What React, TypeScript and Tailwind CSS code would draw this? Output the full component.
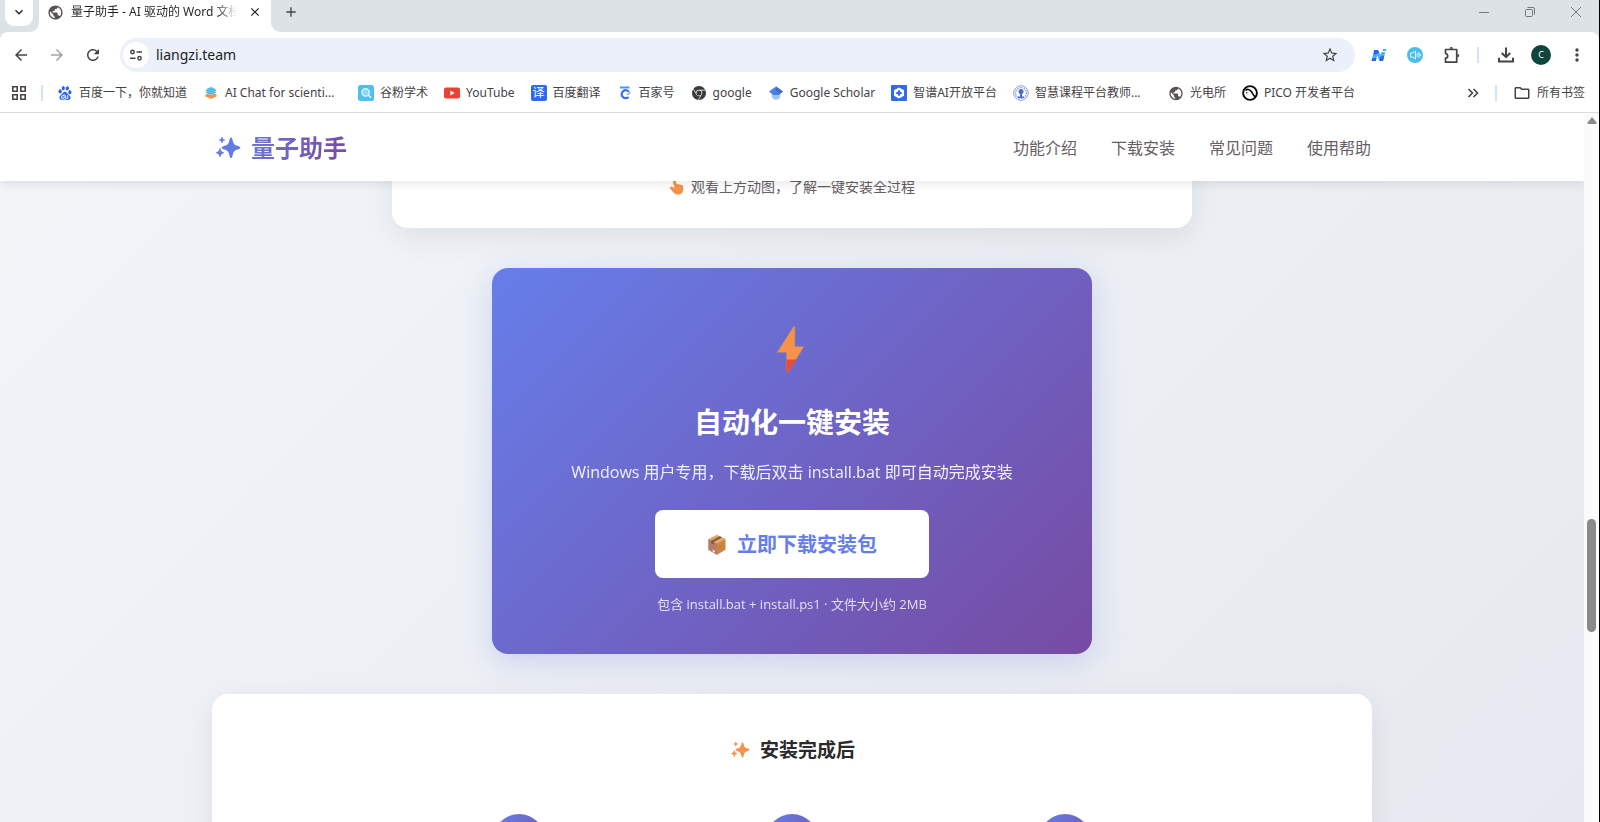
import type { ReactNode } from 'react';
import {
  MdArrowBack,
  MdArrowForward,
  MdClose,
  MdAdd,
  MdKeyboardArrowDown,
  MdMoreVert,
  MdOutlineFolder,
  MdPublic,
  MdRefresh,
  MdStarOutline,
} from 'react-icons/md';
import { SiBaidu, SiGooglechrome } from 'react-icons/si';

/* ---------- Icons ---------- */

function Sparkles({ className }: { className: string }) {
  return (
    <svg viewBox="0 0 28 24" className={className} fill="currentColor" aria-hidden="true">
      <path d="M18 1.5c.8 0 1.2 1 1.8 3.4.8 3 1.700 4 4.600 4.900 1.900.6 2.900 1.100 2.900 1.900s-1 1.300-2.900 1.900c-2.900.9-3.800 1.900-4.600 4.900-.6 2.500-1 3.600-1.800 3.600s-1.200-1.100-1.800-3.600c-.8-3-1.700-4-4.600-4.900-1.900-.6-2.900-1.100-2.900-1.900s1-1.300 2.900-1.900c2.900-.9 3.800-1.900 4.600-4.900C16.800 2.500 17.200 1.500 18 1.500z" />
      <path d="M9 1c.6 1.900.9 2.200 2.800 3C9.900 4.800 9.600 5.100 9 7 8.400 5.100 8.100 4.800 6.200 4 8.100 3.200 8.400 2.900 9 1z" stroke="currentColor" strokeWidth=".6" />
      <path d="M7 12.500c.7 2.700 1.200 3.200 3.700 4.200-2.500 1-3 1.500-3.700 4.200-.7-2.700-1.200-3.200-3.700-4.200 2.500-1 3-1.500 3.700-4.200z" stroke="currentColor" strokeWidth=".8" />
    </svg>
  );
}

function Bolt() {
  return (
    <svg viewBox="0 0 34 52" className="h-[52px] w-[34px]" aria-hidden="true">
      <path d="M18.500 2.500 2 28.500h9.500V48h2L29 22.500h-9V2.500z" fill="#f7924a" stroke="#9c8290" strokeWidth=".7" />
      <path d="M11.500 35.500h10L13.500 48h-2z" fill="#ea4a3a" />
    </svg>
  );
}

function PackageBox() {
  return (
    <svg viewBox="0 0 20 22" className="h-[22px] w-5" aria-hidden="true">
      <path d="M10 1 18.500 5.200v10.500L10 20.800 1.500 15.700V5.200z" fill="#c9853f" />
      <path d="M10 1 18.500 5.200 10 9.700 1.500 5.200z" fill="#e5a865" />
      <path d="M1.500 5.200 10 9.700v11.100L1.500 15.700z" fill="#b57c6e" />
      <path d="M12.700 2.300 4.200 6.700v2.800l2.400 1.300V8L15 3.500z" fill="#7c5a4c" />
      <path d="m5.500 15.500 2.500 1.300v2l-2.500-1.300z" fill="#e4ddd8" />
    </svg>
  );
}

function PointUp() {
  return (
    <svg viewBox="0 0 16 16" className="h-4 w-4" fill="#f7924a" aria-hidden="true">
      <path d="M4.600 1.600c.9-.6 1.900-.2 2.200.7L8 5.500c.5-.7 1.700-.6 2.100.2.600-.5 1.600-.3 2 .4.900-.4 1.900.1 2 1.200.3 2.200.1 4.300-.8 6.100-.8 1.500-2.200 2.100-4.300 2.100-2.700 0-4.100-1.200-5.300-2.700L1.300 9.700c-.6-.8-.3-1.700.5-2s1.500.1 2.500.9l1.200.3L4 3.400c-.2-.7 0-1.400.6-1.800z" />
    </svg>
  );
}

function AppsGrid() {
  return (
    <svg viewBox="0 0 16 16" className="h-4 w-4" fill="none" stroke="#4a4446" strokeWidth="1.600" aria-hidden="true">
      <path d="M1.800 1.800h4.400v4.400H1.800zM9.800 1.800h4.400v4.400H9.800zM1.800 9.800h4.400v4.400H1.800zM9.800 9.800h4.400v4.400H9.800z" />
    </svg>
  );
}

function SiteSettings() {
  return (
    <svg viewBox="0 0 14 14" className="h-3.5 w-3.5" fill="none" stroke="#444" strokeWidth="1.500" aria-hidden="true">
      <circle cx="3.500" cy="4" r="1.700" />
      <path d="M7.500 4H13M1 10.200h5.500" />
      <circle cx="10.500" cy="10.200" r="1.700" />
    </svg>
  );
}

function StackIcon() {
  return (
    <svg viewBox="0 0 16 16" className="h-4 w-4" aria-hidden="true">
      <path d="M2.500 9.500 4.500 8.500 8 10l3.500-1.500 2 1v2L8 14l-5.500-2.500z" fill="#f7924a" />
      <path d="m8 2 3 1.200 2.500 2L12 6.500l1.500 1L8 10 2.500 7.500 4 6.500 2.500 5.200 5 3.200z" fill="#53bfe8" />
    </svg>
  );
}

function SearchBadge() {
  return (
    <svg viewBox="0 0 16 16" className="h-4 w-4" aria-hidden="true">
      <rect width="16" height="16" rx="2.500" fill="#4cc0ee" />
      <circle cx="7.600" cy="7.400" r="3.700" fill="#8fd8f5" stroke="#e6f7fd" strokeWidth="1.200" />
      <path d="m10.500 10.300 2.500 2.500" stroke="#e6f7fd" strokeWidth="1.600" />
    </svg>
  );
}

function YouTubeIcon() {
  return (
    <svg viewBox="0 0 16 16" className="h-4 w-4" aria-hidden="true">
      <rect y="2.500" width="16" height="11" rx="2" fill="#e94235" />
      <path d="M6.300 5.500v5L10.700 8z" fill="#fff" />
    </svg>
  );
}

function BaijiahaoIcon() {
  return (
    <svg viewBox="0 0 16 16" className="h-4 w-4" fill="none" aria-hidden="true">
      <path d="M3 2.500h9.500" stroke="#3f9df0" strokeWidth="2" />
      <path d="M12 7A4 4 0 1 0 11.500 12" stroke="#3b6fe8" strokeWidth="2.200" />
      <path d="M9.500 9.500c1.800 0 3-.5 3.700-2" stroke="#7aa7f5" strokeWidth="1.600" />
    </svg>
  );
}

function ScholarIcon() {
  return (
    <svg viewBox="0 0 16 16" className="h-4 w-4" aria-hidden="true">
      <circle cx="8" cy="10.500" r="4.300" fill="#9cc4f5" />
      <path d="M8 1.500 15 6.500l-2.800 2.300-1.200 1.200H5L3.800 8.800 1 6.500z" fill="#4a80e0" />
      <path d="M8 1.500 15 6.500l-2.800 2.300L8 6z" fill="#3f6fc4" />
    </svg>
  );
}

function ZhipuIcon() {
  return (
    <svg viewBox="0 0 16 16" className="h-4 w-4" aria-hidden="true">
      <rect width="16" height="16" rx="1" fill="#2f6bea" />
      <path d="m8 2.500 5 2.800v5.400l-5 2.800-5-2.800V5.300z" fill="#fff" />
      <path d="m8 5.200.9 1.900 1.900.9-1.900.9L8 10.800l-.9-1.900L5.200 8l1.900-.9z" fill="#2f6bea" stroke="#2f6bea" />
    </svg>
  );
}

function SchoolSeal() {
  return (
    <svg viewBox="0 0 16 16" className="h-4 w-4" fill="none" aria-hidden="true">
      <circle cx="8" cy="8" r="7.300" stroke="#8f9fdd" />
      <circle cx="8" cy="8" r="5.400" stroke="#8f9fdd" strokeDasharray="1.500 .8" strokeWidth="1.400" />
      <circle cx="8" cy="6.500" r="2.500" fill="#4b6cc4" />
      <path d="M7 6.500h2v6.500H7zM5 11.500h6v1.500H5z" fill="#4b6cc4" />
    </svg>
  );
}

function PicoIcon() {
  return (
    <svg viewBox="0 0 16 16" className="h-4 w-4" fill="none" stroke="#0a0a0a" aria-hidden="true">
      <circle cx="8" cy="8" r="6.900" strokeWidth="1.900" />
      <path d="M3.500 5.500C5 3.800 7.500 4 9.300 6.500s2 4 4 5.500" strokeWidth="1.600" />
      <path d="M4 7.800h1.500" />
    </svg>
  );
}

function PuzzleIcon() {
  return (
    <svg viewBox="0 0 18 18" className="h-[18px] w-[18px]" fill="none" stroke="#444" strokeWidth="1.700" aria-hidden="true">
      <path d="M2.500 3.500h11.200v12.700H2.500v-4c1.500-.2 2.200-1 2.200-2.300s-.7-2.200-2.200-2.400z" strokeLinejoin="round" />
      <path d="M6.500 2.800a1.800 1.800 0 0 1 3.600 0zM14.300 7.700a1.900 1.900 0 0 1 0 3.800z" fill="#444" stroke="none" />
    </svg>
  );
}

function DownloadIcon() {
  return (
    <svg viewBox="0 0 18 18" className="h-[18px] w-[18px]" fill="none" stroke="#444" strokeWidth="2" aria-hidden="true">
      <path d="M9 1.500v9.500M4.800 7 9 11.200 13.200 7M2 11.800v3.700h14v-3.700" />
    </svg>
  );
}

function NotebookIcon() {
  return (
    <svg viewBox="0 0 16 16" className="h-4 w-4" aria-hidden="true">
      <path d="M3 3h4l2.300 5L10.500 5h3.700L12 14H8.500L6.200 8.500 4.700 14H.6z" fill="#47b4f2" />
      <path d="M3 3h4l1.300 3-5.500 2zM1.400 11h4.100l-.8 3H.6zM9 10l4.300-1.500L12 14H8.500z" fill="#2d62e8" />
      <path d="M12 2h3.500L15 4h-3.500z" fill="#47b4f2" />
    </svg>
  );
}

function SpeakerIcon() {
  return (
    <svg viewBox="0 0 16 16" className="h-4 w-4" fill="none" stroke="#dff4fd" aria-hidden="true">
      <circle cx="8" cy="8" r="8" fill="#49bdec" stroke="none" />
      <path d="M3.500 6v4h2.200L8.500 12V4L5.700 6z" />
      <path d="M10.200 6v4M12 5v6M13.500 7v2" />
    </svg>
  );
}

/* ---------- Browser chrome ---------- */

function Divider() {
  return <div className="h-4 w-0.5 shrink-0 bg-[#d3e3f3]" />;
}

function TabStrip() {
  return (
    <div className="flex h-8 items-start bg-[#dde2e6] pl-[5px]">
      <button aria-label="搜索标签页" className="flex h-[26px] w-7 items-center justify-center rounded-b-[9px] bg-white pb-0.5 text-[#222]">
        <MdKeyboardArrowDown className="h-4 w-4" />
      </button>
      <div className="relative ml-1.5 flex h-8 w-[232px] items-center gap-[7px] bg-white pr-[9px] pb-2 pl-2">
        <svg viewBox="0 0 10 10" className="absolute bottom-0 -left-2.5 h-2.5 w-2.5" fill="#fff" aria-hidden="true">
          <path d="M10 0v10H0C6 10 10 6 10 0z" />
        </svg>
        <svg viewBox="0 0 10 10" className="absolute -right-2.5 bottom-0 h-2.5 w-2.5" fill="#fff" aria-hidden="true">
          <path d="M0 0v10h10C4 10 0 6 0 0z" />
        </svg>
        <MdPublic className="h-[17px] w-[17px] shrink-0 text-[#5a5356]" />
        <span className="min-w-0 flex-1 overflow-hidden bg-gradient-to-r from-[#222] from-88% to-transparent bg-clip-text text-xs whitespace-nowrap text-transparent">
          量子助手 - AI 驱动的 Word 文档
        </span>
        <button aria-label="关闭标签页" className="ml-1 text-[#222]">
          <MdClose className="h-3.5 w-3.5" />
        </button>
      </div>
      <button aria-label="新标签页" className="ml-3 flex h-6 items-center text-[#444]">
        <MdAdd className="h-4 w-4" />
      </button>
      <div className="ml-auto flex h-6 items-center gap-9 pr-[18px] text-[#777]">
        <button aria-label="最小化" className="flex h-3 w-2.5 items-center">
          <span className="h-px w-full bg-[#777]" />
        </button>
        <button aria-label="还原">
          <svg viewBox="0 0 10 10" className="h-2.5 w-2.5" fill="none" stroke="currentColor" aria-hidden="true">
            <rect x=".5" y="2.500" width="7" height="7" rx="1" />
            <path d="M2.500.5H8a1.500 1.500 0 0 1 1.500 1.500v5.500" />
          </svg>
        </button>
        <button aria-label="关闭">
          <svg viewBox="0 0 10 10" className="h-2.5 w-2.5" stroke="currentColor" aria-hidden="true">
            <path d="m0 0 10 10M10 0 0 10" />
          </svg>
        </button>
      </div>
    </div>
  );
}

function Toolbar() {
  return (
    <div className="bg-[#dde2e6]">
      <div className="flex h-[46px] items-center rounded-t-lg bg-white pr-3 pl-3">
        <div className="flex w-[108px] items-center gap-[18px] text-[#4a4446]">
          <button aria-label="后退"><MdArrowBack className="h-[18px] w-[18px]" /></button>
          <button aria-label="前进" className="text-[#a9a0a5]"><MdArrowForward className="h-[18px] w-[18px]" /></button>
          <button aria-label="重新加载"><MdRefresh className="h-[18px] w-[18px]" /></button>
        </div>
        <div className="flex h-[34px] flex-1 items-center rounded-full bg-[#ebf0fa] pr-4 pl-[3px]">
          <button aria-label="网站信息" className="flex h-[26px] w-[26px] items-center justify-center rounded-full bg-white">
            <SiteSettings />
          </button>
          <input
            aria-label="地址栏"
            defaultValue="liangzi.team"
            className="ml-[7px] flex-1 bg-transparent text-sm text-[#222] outline-none"
          />
          <button aria-label="收藏" className="text-[#444]"><MdStarOutline className="h-[18px] w-[18px]" /></button>
        </div>
        <div className="ml-4 flex items-center">
          <div className="flex items-center gap-5">
            <button aria-label="笔记"><NotebookIcon /></button>
            <button aria-label="朗读"><SpeakerIcon /></button>
            <button aria-label="扩展程序"><PuzzleIcon /></button>
          </div>
          <div className="mr-[18px] ml-4"><Divider /></div>
          <div className="flex items-center gap-4">
            <button aria-label="下载内容"><DownloadIcon /></button>
            <button className="flex h-5 w-5 items-center justify-center rounded-full bg-[#10443f] text-[9px] text-white">C</button>
            <button aria-label="更多" className="text-[#444]"><MdMoreVert className="h-5 w-5" /></button>
          </div>
        </div>
      </div>
    </div>
  );
}

interface Bookmark {
  label: string;
  icon: ReactNode;
  wide?: boolean;
}

const bookmarks: Bookmark[] = [
  { label: '百度一下，你就知道', icon: <SiBaidu className="h-3.5 w-4 text-[#2f62e4]" /> },
  { label: 'AI Chat for scienti...', icon: <StackIcon />, wide: true },
  { label: '谷粉学术', icon: <SearchBadge /> },
  { label: 'YouTube', icon: <YouTubeIcon /> },
  {
    label: '百度翻译',
    icon: <span className="flex h-4 w-4 items-center justify-center rounded-[2px] bg-[#2b6ae8] text-xs text-white">译</span>,
  },
  { label: '百家号', icon: <BaijiahaoIcon /> },
  { label: 'google', icon: <SiGooglechrome className="h-3.5 w-4 text-[#3a3a3a]" /> },
  { label: 'Google Scholar', icon: <ScholarIcon /> },
  { label: '智谱AI开放平台', icon: <ZhipuIcon /> },
  { label: '智慧课程平台教师...', icon: <SchoolSeal />, wide: true },
  { label: '光电所', icon: <MdPublic className="h-[17px] w-4 text-[#5a5356]" /> },
  { label: 'PICO 开发者平台', icon: <PicoIcon /> },
];

function BookmarksBar() {
  return (
    <div className="flex h-[35px] items-center border-b border-[#dcdcde] bg-white pr-3.5 pb-1 pl-[11px] text-xs text-[#454246]">
      <button aria-label="应用"><AppsGrid /></button>
      <div className="mr-3.5 ml-3.5"><Divider /></div>
      <nav className="flex min-w-0 flex-1 items-center gap-4 overflow-hidden whitespace-nowrap">
        {bookmarks.map((item) => (
          <a key={item.label} href="#" className="flex shrink-0 items-center gap-1.5">
            {item.icon}
            <span className={item.wide ? 'w-[117px]' : undefined}>{item.label}</span>
          </a>
        ))}
      </nav>
      <button aria-label="更多书签">
        <svg viewBox="0 0 12 12" className="h-3 w-3" fill="none" stroke="#444" strokeWidth="1.600" aria-hidden="true">
          <path d="m1.500 2 4 4-4 4M6.500 2l4 4-4 4" />
        </svg>
      </button>
      <div className="mr-4 ml-4"><Divider /></div>
      <a href="#" className="flex items-center gap-1.5">
        <MdOutlineFolder className="h-[18px] w-[18px]" />
        所有书签
      </a>
    </div>
  );
}

/* ---------- Page ---------- */

const navLinks = ['功能介绍', '下载安装', '常见问题', '使用帮助'];
const steps = [1, 2, 3];

function SiteHeader() {
  return (
    <header className="relative z-10 bg-white shadow-[0_2px_10px_rgba(0,0,0,0.1)]">
      <div className="mx-auto flex h-[68px] max-w-[1160px] items-center justify-between px-px pt-px">
        <a href="#" className="flex items-center gap-2.5 text-2xl font-semibold">
          <Sparkles className="h-6 w-7 text-[#637ae0]" />
          <span className="bg-gradient-to-r from-[#6a74d8] to-[#764ba2] bg-clip-text text-transparent">量子助手</span>
        </a>
        <nav className="flex gap-[34px] text-base text-[#666065]">
          {navLinks.map((label) => (
            <a key={label} href="#">{label}</a>
          ))}
        </nav>
      </div>
    </header>
  );
}

function DownloadCard() {
  return (
    <section className="mt-10 flex w-full max-w-[600px] flex-col items-center rounded-2xl bg-[linear-gradient(135deg,#667eea,#764ba2)] pt-14 pb-10 text-white shadow-[0_8px_30px_rgba(102,126,234,0.25)]">
      <Bolt />
      <h2 className="mt-7 text-[28px] leading-9 font-bold">自动化一键安装</h2>
      <p className="mt-5 text-base leading-6 opacity-90">Windows 用户专用，下载后双击 install.bat 即可自动完成安装</p>
      <a href="#" className="mt-[26px] flex h-[68px] items-center gap-2.5 rounded-lg bg-white px-[52px] pt-0.5 text-xl font-semibold text-[#667eea]">
        <PackageBox />
        立即下载安装包
      </a>
      <p className="mt-4 text-[13px] leading-5 opacity-80">包含 install.bat + install.ps1 · 文件大小约 2MB</p>
    </section>
  );
}

function Scrollbar() {
  return (
    <div className="flex w-[15px] shrink-0 flex-col items-center bg-[#fbfbfb] pt-1">
      <svg viewBox="0 0 10 7" className="h-[7px] w-2.5" fill="#8a8a8a" aria-hidden="true">
        <path d="M5 0 9.500 5.500Q10 7 8.500 7h-7Q0 7 .5 5.500z" />
      </svg>
      <div className="grow-56" />
      <div className="w-[9px] grow-16 rounded-full bg-[#8a8a8a]" />
      <div className="grow-27" />
    </div>
  );
}

export default function App() {
  return (
    <div className="flex h-screen flex-col overflow-hidden border-r border-black bg-white font-['Noto_Sans','Noto_Sans_CJK_SC',sans-serif]">
      <TabStrip />
      <Toolbar />
      <BookmarksBar />
      <div className="flex min-h-0 flex-1 font-['Open_Sans','Noto_Sans_CJK_SC',sans-serif]">
        <div className="min-w-0 flex-1 overflow-hidden bg-[linear-gradient(135deg,#f2f5f8,#e6e9ef)]">
          <SiteHeader />
          <main className="-mt-6 flex flex-col items-center">
            <section className="flex w-full max-w-[800px] items-center justify-center gap-1.5 rounded-b-2xl bg-white pt-5 pb-[31px] text-sm leading-5 text-[#666065] shadow-[0_8px_30px_rgba(0,0,0,0.08)]">
              <PointUp />
              观看上方动图，了解一键安装全过程
            </section>
            <DownloadCard />
            <section className="mt-10 w-full max-w-[1160px] rounded-2xl bg-white pt-10 pb-10 shadow-[0_8px_30px_rgba(0,0,0,0.08)]">
              <h3 className="flex items-center justify-center gap-2.5 text-[19px] leading-8 font-semibold text-[#2b2b2b]">
                <Sparkles className="h-[18px] w-[21px] text-[#f7924a]" />
                安装完成后
              </h3>
              <ol className="mx-auto mt-12 grid max-w-[820px] grid-cols-3">
                {steps.map((step) => (
                  <li key={step} className="flex justify-center">
                    <span className="h-[52px] w-[52px] rounded-full bg-[linear-gradient(135deg,#667eea,#764ba2)]" />
                  </li>
                ))}
              </ol>
            </section>
          </main>
        </div>
        <Scrollbar />
      </div>
    </div>
  );
}
